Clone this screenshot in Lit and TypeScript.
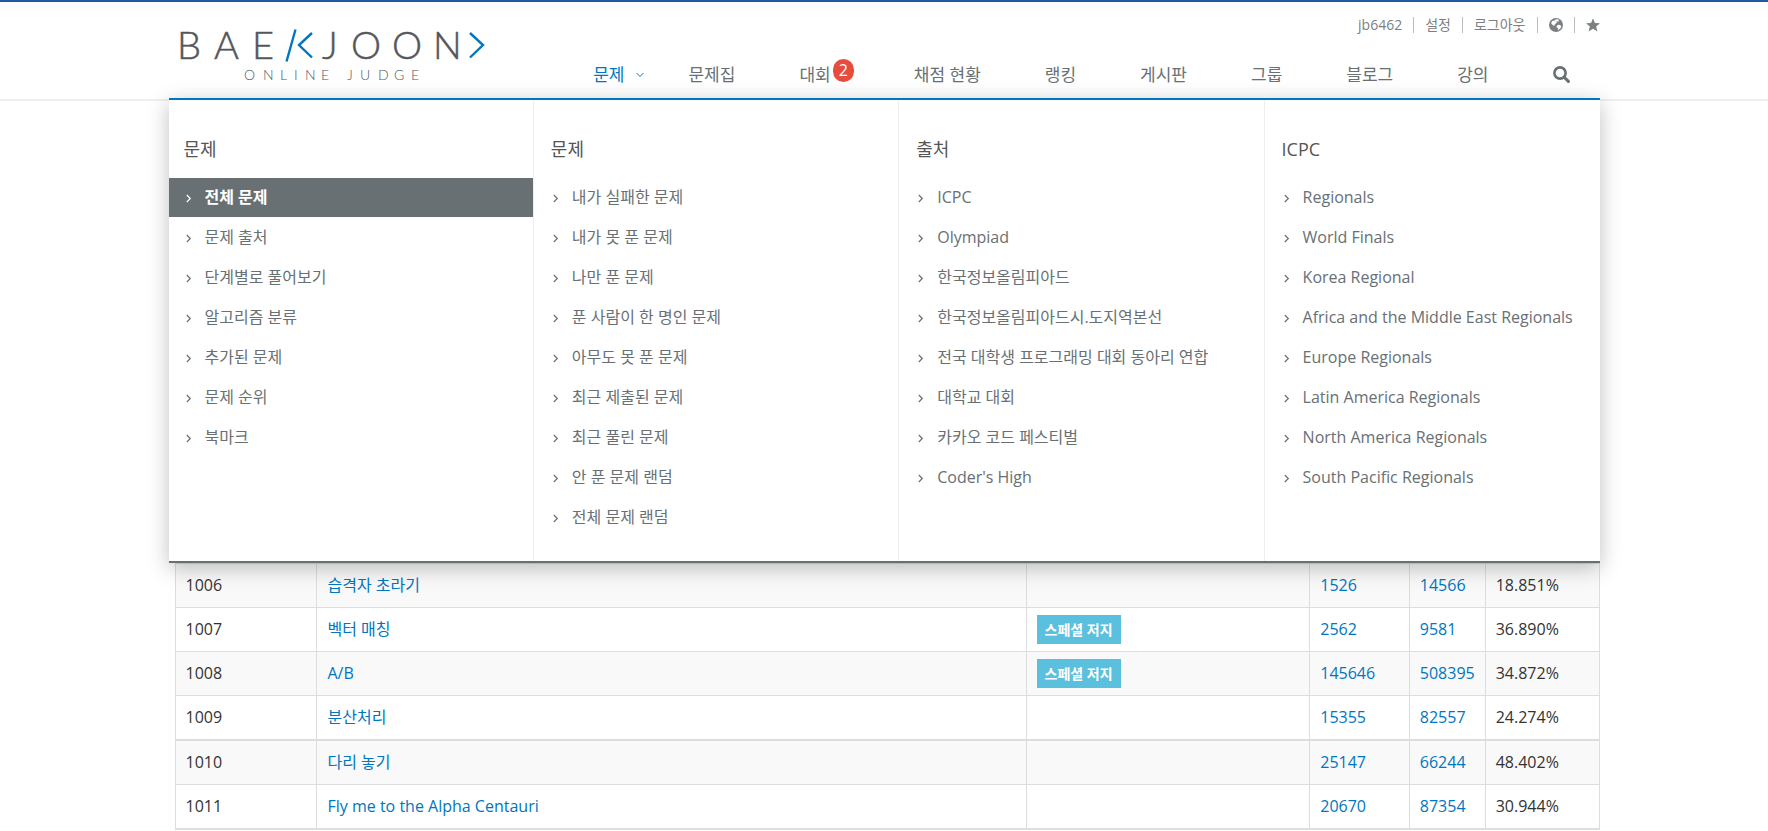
import { LitElement, html, css, svg, nothing } from "lit";
import { customElement, property } from "lit/decorators.js";

interface MenuColumn {
  title: string;
  items: string[];
  active?: number;
}

interface Problem {
  id: number;
  title: string;
  special?: boolean;
  solved: number;
  submitted: number;
  ratio: string;
  groupEnd?: boolean;
}

const MENU: MenuColumn[] = [
  {
    title: "문제",
    active: 0,
    items: ["전체 문제", "문제 출처", "단계별로 풀어보기", "알고리즘 분류", "추가된 문제", "문제 순위", "북마크"],
  },
  {
    title: "문제",
    items: [
      "내가 실패한 문제",
      "내가 못 푼 문제",
      "나만 푼 문제",
      "푼 사람이 한 명인 문제",
      "아무도 못 푼 문제",
      "최근 제출된 문제",
      "최근 풀린 문제",
      "안 푼 문제 랜덤",
      "전체 문제 랜덤",
    ],
  },
  {
    title: "출처",
    items: [
      "ICPC",
      "Olympiad",
      "한국정보올림피아드",
      "한국정보올림피아드시.도지역본선",
      "전국 대학생 프로그래밍 대회 동아리 연합",
      "대학교 대회",
      "카카오 코드 페스티벌",
      "Coder's High",
    ],
  },
  {
    title: "ICPC",
    items: [
      "Regionals",
      "World Finals",
      "Korea Regional",
      "Africa and the Middle East Regionals",
      "Europe Regionals",
      "Latin America Regionals",
      "North America Regionals",
      "South Pacific Regionals",
    ],
  },
];

const PROBLEMS: Problem[] = [
  { id: 1006, title: "습격자 초라기", solved: 1526, submitted: 14566, ratio: "18.851%" },
  { id: 1007, title: "벡터 매칭", special: true, solved: 2562, submitted: 9581, ratio: "36.890%" },
  { id: 1008, title: "A/B", special: true, solved: 145646, submitted: 508395, ratio: "34.872%" },
  { id: 1009, title: "분산처리", solved: 15355, submitted: 82557, ratio: "24.274%", groupEnd: true },
  { id: 1010, title: "다리 놓기", solved: 25147, submitted: 66244, ratio: "48.402%" },
  { id: 1011, title: "Fly me to the Alpha Centauri", solved: 20670, submitted: 87354, ratio: "30.944%", groupEnd: true },
];

const reset = css`
  * {
    box-sizing: border-box;
  }
  a {
    color: inherit;
    text-decoration: none;
  }
  ul {
    list-style: none;
    margin: 0;
    padding: 0;
  }
`;

@customElement("site-logo")
export class SiteLogo extends LitElement {
  static styles = css`
    :host {
      display: block;
    }
    .logo {
      display: block;
      overflow: visible;
      font-family: Lato, "Open Sans", sans-serif;
    }
    .name {
      font-size: 38px;
      font-weight: 300;
      fill: #55565a;
      stroke: #55565a;
      stroke-width: 0.5;
    }
    .sub {
      font-size: 14px;
      font-weight: 300;
      fill: #55565a;
    }
    .mark {
      fill: none;
      stroke: #0076c0;
      stroke-width: 2.4;
    }
  `;

  render() {
    return html`<svg class="logo" width="330" height="60" viewBox="0 0 330 60" role="img" aria-label="Baekjoon Online Judge">
      ${svg`
        <text class="name" y="34" x="8 45 83">BAE</text>
        <text class="name" y="34" x="153 182 223 264">JOON</text>
        <g class="mark">
          <path d="M126.5 4.5 L117.5 36.5" />
          <path d="M143 8 L130 20 L143 32.5" />
          <path d="M301 8 L314 20 L301 32.5" />
        </g>
        <text class="sub" y="55" x="75 94 111 125 136 152">ONLINE</text>
        <text class="sub" y="55" x="178 191 209 225 242">JUDGE</text>
      `}
    </svg>`;
  }
}

@customElement("site-header")
export class SiteHeader extends LitElement {
  static styles = [
    reset,
    css`
      :host {
        display: block;
        border-top: 2px solid #1f5aa3;
        border-bottom: 2px solid #eee;
      }
      .inner {
        display: flex;
        justify-content: space-between;
        max-width: 1431px;
        min-height: 97px;
        margin: 0 auto;
      }
      .brand {
        padding-top: 23px;
      }
      .side {
        display: flex;
        flex-direction: column;
        align-items: flex-end;
        justify-content: space-between;
        padding: 13px 0 9px;
      }
      .user {
        display: flex;
        align-items: center;
        font-size: 14px;
        line-height: 20px;
        color: #7c8082;
      }
      .user li {
        display: flex;
        align-items: center;
      }
      .user li + li::before {
        content: "";
        width: 1px;
        height: 16px;
        margin: 0 11px;
        background: #bbb;
      }
      .user a,
      .nav a {
        display: flex;
        align-items: center;
      }
      .nav {
        display: flex;
        font-size: 17px;
        line-height: 26px;
        color: #687074;
      }
      .nav a {
        padding: 0 32px;
      }
      .nav .current {
        gap: 12px;
        padding-right: 12px;
        color: #0076c0;
      }
      .nav .counted {
        padding-right: 28px;
      }
      .badge {
        margin: 0 0 8px 2px;
        padding: 0 6px;
        border-radius: 12px;
        background: #e74c3c;
        color: #fff;
        font-size: 16px;
        line-height: 23px;
        height: 23px;
      }
      .search {
        display: flex;
        align-items: center;
        padding: 0 30px 0 32px;
        border: 0;
        background: none;
        color: inherit;
      }
    `,
  ];

  render() {
    return html`
      <div class="inner">
        <a class="brand" href="#" aria-label="Baekjoon Online Judge"><site-logo></site-logo></a>
        <div class="side">
          <ul class="user">
            <li><a href="#">jb6462</a></li>
            <li><a href="#">설정</a></li>
            <li><a href="#">로그아웃</a></li>
            <li>
              <a href="#" aria-label="언어">
                <svg width="14" height="14" viewBox="0 0 14 14">
                  <circle cx="7" cy="7" r="7" fill="#7c8082" />
                  <path
                    fill="#fff"
                    d="M6.6 1.5 L8.6 1.3 L10.4 2.1 L9.3 2.6 L9.9 3.3 L8.8 3.7 L8 3.1 L7.2 4 L8.3 4.5 L7 5.3 L6.2 6.3 L5.2 6.9 L5.6 8 L4.6 7.7 L3.2 6.6 L2.2 5.2 L2.8 3.4 L4.2 2.6 L5 3 Z M8.2 7.2 L10.4 6.8 L12.4 8 L11.6 10.2 L9.8 11.6 L9 12.4 L9.1 10.6 L8 9.6 L7.4 8.4 Z"
                  />
                </svg>
              </a>
            </li>
            <li>
              <a href="#" aria-label="즐겨찾기">
                <svg width="14" height="14" viewBox="0 0 14 14">
                  <path
                    fill="#7c8082"
                    d="M7 0.2 L8.9 4.9 L14 5.3 L10.1 8.6 L11.4 13.5 L7 10.8 L2.6 13.5 L3.9 8.6 L0 5.3 L5.1 4.9 Z"
                  />
                </svg>
              </a>
            </li>
          </ul>
          <nav class="nav">
            <a class="current" href="#"
              >문제<svg width="8" height="6" viewBox="0 0 8 6">
                <path d="M0.5 1 L4 4.5 L7.5 1" fill="none" stroke="currentColor" />
              </svg>
            </a>
            <a href="#">문제집</a>
            <a class="counted" href="#">대회<span class="badge">2</span></a>
            <a href="#">채점 현황</a>
            <a href="#">랭킹</a>
            <a href="#">게시판</a>
            <a href="#">그룹</a>
            <a href="#">블로그</a>
            <a href="#">강의</a>
            <button class="search" type="button" aria-label="검색">
              <svg width="17" height="17" viewBox="0 0 17 17" fill="none" stroke="#687074">
                <circle cx="7" cy="7" r="5.6" stroke-width="2.6" />
                <path d="M11.2 11.2 L15.4 15.4" stroke-width="3" stroke-linecap="round" />
              </svg>
            </button>
          </nav>
        </div>
      </div>
    `;
  }
}

@customElement("mega-menu")
export class MegaMenu extends LitElement {
  @property({ attribute: false }) columns: MenuColumn[] = [];

  static styles = [
    reset,
    css`
      :host {
        display: grid;
        grid-template-columns: 12fr 12fr 12fr 11fr;
        border-top: 2px solid #0076c0;
        border-bottom: 2px solid #687074;
        background: #fff;
        box-shadow: 0 5px 20px rgba(0, 0, 0, 0.25);
      }
      .column {
        padding: 36px 0 24px;
        border-right: 1px solid #eee;
      }
      .column:last-child {
        border-right: 0;
      }
      .title {
        margin: 0 0 16px;
        padding-left: 15px;
        font-size: 18px;
        font-weight: 400;
        line-height: 26px;
        color: #555;
      }
      .column + .column .title,
      .column + .column .item {
        padding-left: 17px;
      }
      .list {
        display: grid;
        gap: 1px;
      }
      .item {
        display: flex;
        align-items: center;
        gap: 12px;
        padding: 6px 0 7px 15px;
        font-size: 16px;
        line-height: 26px;
        color: #687074;
        white-space: nowrap;
      }
      .active {
        background: #687074;
        color: #fff;
        font-weight: 600;
      }
      .arrow {
        flex: none;
        margin-top: 3px;
      }
    `,
  ];

  render() {
    return this.columns.map(
      (column) => html`
        <section class="column">
          <h3 class="title">${column.title}</h3>
          <ul class="list">
            ${column.items.map(
              (item, i) => html`
                <li>
                  <a class=${i === column.active ? "item active" : "item"} href="#">
                    <svg class="arrow" width="9" height="9" viewBox="0 0 9 9">
                      <path d="M2.8 1 L6.3 4.5 L2.8 8" fill="none" stroke="currentColor" stroke-width="1.2" />
                    </svg>
                    ${item}
                  </a>
                </li>
              `
            )}
          </ul>
        </section>
      `
    );
  }
}

@customElement("problem-table")
export class ProblemTable extends LitElement {
  @property({ attribute: false }) problems: Problem[] = [];

  static styles = [
    reset,
    css`
      :host {
        display: block;
      }
      .table {
        width: 100%;
        border-collapse: collapse;
        font-size: 16px;
        line-height: 27px;
        color: #333;
      }
      .table td {
        padding: 8px 10px;
        border: 1px solid #ddd;
      }
      .table tr:nth-child(odd) {
        background: #f9f9f9;
      }
      .table .group-end td {
        border-bottom-width: 2px;
      }
      .table a {
        color: #0076c0;
      }
      .id {
        width: 10%;
      }
      .name {
        width: 50%;
      }
      .info {
        width: 20%;
      }
      .solved {
        width: 7%;
      }
      .submitted {
        width: 5%;
      }
      .ratio {
        width: 8%;
      }
      .table .info {
        padding: 7px 10px;
      }
      .label {
        display: block;
        width: fit-content;
        padding: 0 8px;
        background: #5bc0de;
        color: #fff;
        font-size: 14px;
        line-height: 29px;
        font-weight: 600;
      }
    `,
  ];

  render() {
    return html`
      <table class="table">
        <tbody>
          ${this.problems.map(
            (p) => html`
              <tr class=${p.groupEnd ? "group-end" : ""}>
                <td class="id">${p.id}</td>
                <td class="name"><a href="#">${p.title}</a></td>
                <td class="info">${p.special ? html`<span class="label">스페셜 저지</span>` : nothing}</td>
                <td class="solved"><a href="#">${p.solved}</a></td>
                <td class="submitted"><a href="#">${p.submitted}</a></td>
                <td class="ratio">${p.ratio}</td>
              </tr>
            `
          )}
        </tbody>
      </table>
    `;
  }
}

@customElement("app-root")
export class AppRoot extends LitElement {
  static styles = css`
    :host {
      display: block;
      background: #fff;
      font-family: "Open Sans", "Noto Sans CJK KR", sans-serif;
    }
    .content {
      max-width: 1431px;
      margin: -3px auto 0;
    }
    .menu {
      position: relative;
      z-index: 1;
    }
    .problems {
      padding-left: 6px;
    }
  `;

  render() {
    return html`
      <site-header></site-header>
      <main class="content">
        <mega-menu class="menu" .columns=${MENU}></mega-menu>
        <problem-table class="problems" .problems=${PROBLEMS}></problem-table>
      </main>
    `;
  }
}
